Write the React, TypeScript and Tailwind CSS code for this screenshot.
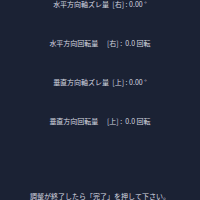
export default function App() {
  const lines = [
    "水平方向軸ズレ量  [右] : 0.00 °",
    "水平方向回転量　 [右] :  0.0 回転",
    "垂直方向軸ズレ量  [上] : 0.00 °",
    "垂直方向回転量　 [上] :  0.0 回転",
  ];
  return (
    <div
      className="h-[200px] w-[200px] overflow-hidden bg-[#1b2234] text-[#d6d9e0] flex flex-col items-center"
      style={{ fontFamily: '"Noto Sans CJK JP", "Noto Sans", sans-serif' }}
    >
      <div className="flex flex-col items-center gap-[31px] text-[7px] leading-[8px] whitespace-pre">
        {lines.map((l) => (
          <p key={l}>{l}</p>
        ))}
      </div>
      <p className="mt-[67px] text-[7px] leading-[8px] whitespace-pre">
        調整が終了したら「完了」を押して下さい。
      </p>
    </div>
  );
}
